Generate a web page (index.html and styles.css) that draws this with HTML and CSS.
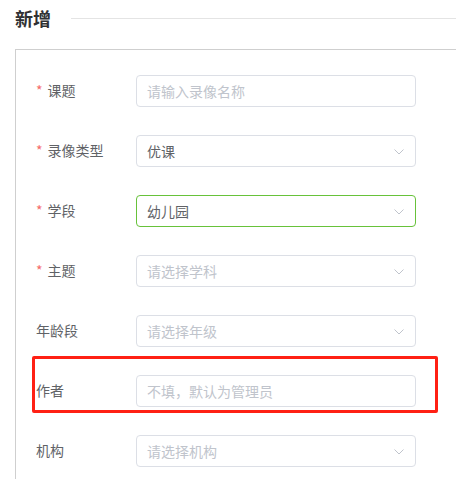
FILE: index.html
```html
<!DOCTYPE html>
<html lang="zh-CN">
<head>
    <meta charset="UTF-8">
    <meta name="viewport" content="width=device-width, initial-scale=1.0">
    <title>新增</title>
    <link rel="stylesheet" href="styles.css">
</head>
<body>
    <div class="page-head">
        <h2>新增</h2>
        <div class="head-line"></div>
    </div>

    <div class="panel">
        <form class="form">
            <div class="row">
                <label class="label required">课题</label>
                <div class="field"><input type="text" placeholder="请输入录像名称"></div>
            </div>
            <div class="row">
                <label class="label required">录像类型</label>
                <div class="field select"><input type="text" value="优课" readonly>
                    <svg class="arrow" viewBox="0 0 10 6"><polyline points="0.5,0.5 5,5 9.5,0.5"/></svg>
                </div>
            </div>
            <div class="row">
                <label class="label required">学段</label>
                <div class="field select focus"><input type="text" value="幼儿园" readonly>
                    <svg class="arrow" viewBox="0 0 10 6"><polyline points="0.5,0.5 5,5 9.5,0.5"/></svg>
                </div>
            </div>
            <div class="row">
                <label class="label required">主题</label>
                <div class="field select"><input type="text" placeholder="请选择学科" readonly>
                    <svg class="arrow" viewBox="0 0 10 6"><polyline points="0.5,0.5 5,5 9.5,0.5"/></svg>
                </div>
            </div>
            <div class="row">
                <label class="label">年龄段</label>
                <div class="field select"><input type="text" placeholder="请选择年级" readonly>
                    <svg class="arrow" viewBox="0 0 10 6"><polyline points="0.5,0.5 5,5 9.5,0.5"/></svg>
                </div>
            </div>
            <div class="row">
                <!-- 标注框 -->
                <div class="mark"></div>
                <label class="label">作者</label>
                <div class="field"><input type="text" placeholder="不填，默认为管理员"></div>
            </div>
            <div class="row">
                <label class="label">机构</label>
                <div class="field select"><input type="text" placeholder="请选择机构" readonly>
                    <svg class="arrow" viewBox="0 0 10 6"><polyline points="0.5,0.5 5,5 9.5,0.5"/></svg>
                </div>
            </div>
        </form>
    </div>
</body>
</html>
```

FILE: styles.css
```css
* {
    box-sizing: border-box;
}
body {
    margin: 0;
    overflow: hidden;
    background: #fff;
    font-family: "Noto Sans CJK SC", "Noto Sans", sans-serif;
    color: #606266;
}
.page-head {
    display: flex;
    align-items: center;
    height: 36px;
    padding-left: 15px;
}
.page-head h2 {
    margin: 0;
    font-size: 18px;
    font-weight: bold;
    color: #303133;
    line-height: 36px;
}
.head-line {
    flex: 1;
    height: 1px;
    margin-left: 20px;
    background: #e4e4e4;
}
/* 面板右侧和底部超出画面，不显示边框 */
.panel {
    margin: 13px 0 0 15px;
    border-top: 1px solid #cfcfcf;
    border-left: 1px solid #cfcfcf;
}
.form {
    padding: 25px 0 12px;
}
.row {
    position: relative;
    display: flex;
    align-items: center;
    height: 32px;
    margin-bottom: 28px;
}
.row:last-child {
    margin-bottom: 0;
}
.label {
    width: 120px;
    padding-left: 20px;
    font-size: 14px;
    line-height: 20px;
    margin-top: -2px;
    color: #606266;
}
.label.required::before {
    content: "*";
    color: #f56c6c;
    margin-right: 5px;
}
.field {
    position: relative;
    width: 280px;
    height: 32px;
}
.field input {
    width: 100%;
    height: 32px;
    padding: 0 30px 0 10px;
    border: 1px solid #dcdfe6;
    border-radius: 4px;
    font-family: inherit;
    font-size: 14px;
    color: #606266;
    outline: none;
    background: #fff;
}
.field input::placeholder {
    color: #c0c4cc;
}
.field.focus input {
    border-color: #67c23a;
}
.arrow {
    position: absolute;
    right: 12px;
    top: 14px;
    width: 10px;
    height: 6px;
    fill: none;
    stroke: #c0c4cc;
    stroke-width: 1;
}
.mark {
    position: absolute;
    left: 16px;
    top: -19px;
    width: 406px;
    height: 57px;
    border: 3px solid #ff2014;
    border-radius: 2px;
}
```
